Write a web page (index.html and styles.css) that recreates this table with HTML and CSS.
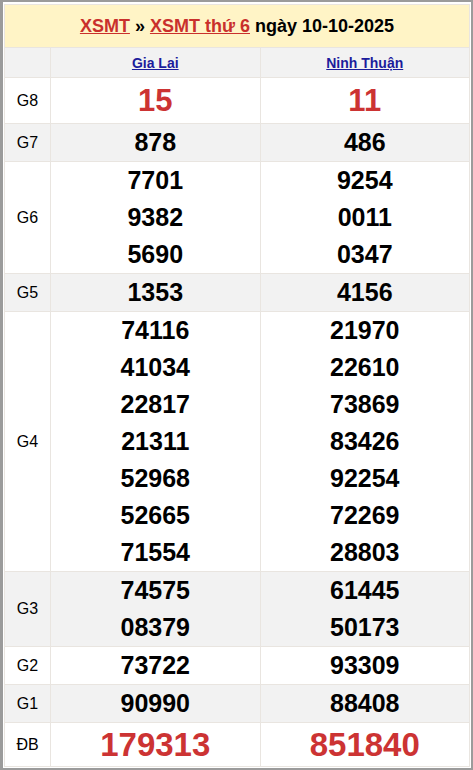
FILE: index.html
```html
<!DOCTYPE html>
<html lang="vi">
<head>
<meta charset="utf-8">
<title>XSMT thứ 6 ngày 10-10-2025</title>
<link rel="stylesheet" href="styles.css">
</head>
<body>
<div class="frame">
  <table class="kq">
    <colgroup>
      <col class="c-lbl">
      <col class="c-prov">
      <col class="c-prov">
    </colgroup>
    <tr class="title-row">
      <th colspan="3" class="title"><a href="#" class="red-link">XSMT</a> » <a href="#" class="red-link">XSMT thứ 6</a> ngày 10-10-2025</th>
    </tr>
    <tr class="prov-row alt">
      <th class="lbl"></th>
      <th><a href="#" class="prov">Gia Lai</a></th>
      <th><a href="#" class="prov">Ninh Thuận</a></th>
    </tr>
    <tr class="g8">
      <td class="lbl">G8</td>
      <td><div class="num big">15</div></td>
      <td><div class="num big">11</div></td>
    </tr>
    <tr class="alt">
      <td class="lbl">G7</td>
      <td><div class="num">878</div></td>
      <td><div class="num">486</div></td>
    </tr>
    <tr>
      <td class="lbl">G6</td>
      <td><div class="num">7701</div><div class="num">9382</div><div class="num">5690</div></td>
      <td><div class="num">9254</div><div class="num">0011</div><div class="num">0347</div></td>
    </tr>
    <tr class="alt">
      <td class="lbl">G5</td>
      <td><div class="num">1353</div></td>
      <td><div class="num">4156</div></td>
    </tr>
    <tr>
      <td class="lbl">G4</td>
      <td><div class="num">74116</div><div class="num">41034</div><div class="num">22817</div><div class="num">21311</div><div class="num">52968</div><div class="num">52665</div><div class="num">71554</div></td>
      <td><div class="num">21970</div><div class="num">22610</div><div class="num">73869</div><div class="num">83426</div><div class="num">92254</div><div class="num">72269</div><div class="num">28803</div></td>
    </tr>
    <tr class="alt">
      <td class="lbl">G3</td>
      <td><div class="num">74575</div><div class="num">08379</div></td>
      <td><div class="num">61445</div><div class="num">50173</div></td>
    </tr>
    <tr>
      <td class="lbl">G2</td>
      <td><div class="num">73722</div></td>
      <td><div class="num">93309</div></td>
    </tr>
    <tr class="alt">
      <td class="lbl">G1</td>
      <td><div class="num">90990</div></td>
      <td><div class="num">88408</div></td>
    </tr>
    <tr class="db">
      <td class="lbl">ĐB</td>
      <td><div class="num big db-num">179313</div></td>
      <td><div class="num big db-num">851840</div></td>
    </tr>
  </table>
</div>
</body>
</html>
```
FILE: styles.css
```css
html, body {
  margin: 0;
  padding: 0;
  background: #ffffff;
}
body {
  font-family: "Liberation Sans", Arial, sans-serif;
  color: #000;
}
.frame {
  box-sizing: border-box;
  width: 473px;
  height: 770px;
  border: 2px solid #9b9b9b;
  border-left-width: 3px;
  padding: 2px 1px 0 1px;
}
.kq {
  width: 100%;
  border-collapse: collapse;
  table-layout: fixed;
}
.c-lbl { width: 46px; }
.kq td, .kq th {
  border: 1px solid #e9e5e0;
  padding: 0;
  text-align: center;
  vertical-align: middle;
}
.title-row .title {
  background: #fff4c6;
  height: 42px;
  font-size: 18px;
  font-weight: bold;
  color: #000;
}
.red-link {
  color: #c9302c;
  text-decoration: underline;
}
.prov-row th {
  height: 29px;
  font-weight: normal;
}
.prov {
  color: #1c1c9c;
  font-size: 14px;
  font-weight: bold;
  text-decoration: underline;
}
.alt td, .alt th {
  background: #f2f2f2;
}
.lbl {
  font-size: 16px;
  font-weight: normal;
}
.num {
  font-size: 25px;
  font-weight: bold;
  line-height: 37px;
}
.num.big {
  color: #cc3333;
  font-size: 31px;
  line-height: 45px;
}
.num.db-num {
  font-size: 33px;
  line-height: 43px;
}
```
